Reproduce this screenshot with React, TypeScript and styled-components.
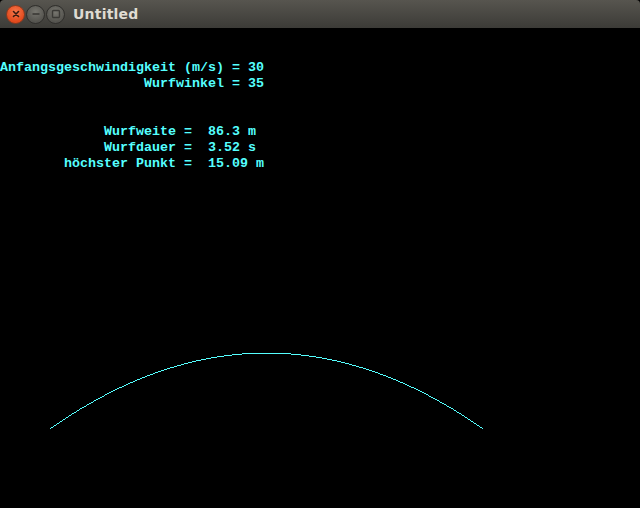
import React from 'react';
import styled, { createGlobalStyle } from 'styled-components';

const GlobalStyle = createGlobalStyle`
  html, body {
    margin: 0;
    padding: 0;
    background: #000;
  }
`;

const Window = styled.div`
  width: 640px;
  height: 508px;
  display: flex;
  flex-direction: column;
  background: #000;
  overflow: hidden;
`;

const TitleBar = styled.div`
  height: 28px;
  flex: none;
  display: flex;
  align-items: center;
  padding-left: 6px;
  background: linear-gradient(#57554f, #3c3b37);
  border-top-left-radius: 4px;
  border-top-right-radius: 4px;
`;

const Buttons = styled.div`
  display: flex;
  gap: 1px;
  margin-right: 8px;
`;

const CircleButton = styled.div<{ $kind: 'close' | 'min' | 'max' }>`
  width: 19px;
  height: 19px;
  border-radius: 50%;
  box-sizing: border-box;
  display: flex;
  align-items: center;
  justify-content: center;
  border: 1px solid ${(p) => (p.$kind === 'close' ? '#8c3a1f' : '#2f2e2b')};
  background: ${(p) =>
    p.$kind === 'close'
      ? 'radial-gradient(circle at 50% 35%, #f6784c, #e2491c 70%)'
      : 'radial-gradient(circle at 50% 35%, #77766f, #55544f 70%)'};
`;

const Title = styled.span`
  font-family: 'DejaVu Sans', 'Noto Sans', sans-serif;
  font-weight: bold;
  font-size: 14px;
  color: #dfdbd2;
  letter-spacing: 0.2px;
`;

const Screen = styled.div`
  position: relative;
  flex: 1;
  display: flex;
  flex-direction: column;
  padding-top: 32px;
`;

const Row = styled.div`
  height: 16px;
  line-height: 16px;
  white-space: pre;
  font-family: 'Liberation Mono', 'DejaVu Sans Mono', monospace;
  font-weight: bold;
  font-size: 13.33px;
  color: #55ffff;
`;

const Plot = styled.svg`
  position: absolute;
  left: 0;
  top: 0;
`;

const rows = [
  'Anfangsgeschwindigkeit (m/s) = 30',
  '                  Wurfwinkel = 35',
  '',
  '',
  '             Wurfweite =  86.3 m',
  '             Wurfdauer =  3.52 s',
  '        höchster Punkt =  15.09 m',
];

// Flugbahn: 5 px pro Meter, Abwurf bei x=50, Boden bei y=400 (Screen-Koordinaten)
const trajectory = () => {
  const x0 = 50;
  const width = 432;
  const height = 75.45;
  const ground = 400;
  const pts: { x: number; y: number }[] = [];
  for (let i = 0; i <= width; i++) {
    const t = i / width;
    pts.push({ x: x0 + i, y: Math.round(ground - 4 * height * t * (1 - t)) });
  }
  return pts;
};

const Cross = () => (
  <svg width="8" height="8" viewBox="0 0 8 8">
    <path d="M1.5 1.5 L6.5 6.5 M6.5 1.5 L1.5 6.5" stroke="#3a1a10" strokeWidth="1.6" strokeLinecap="round" />
  </svg>
);

const Minus = () => (
  <svg width="10" height="10" viewBox="0 0 10 10">
    <path d="M1.5 5 H8.5" stroke="#3a3935" strokeWidth="1.6" />
  </svg>
);

const Square = () => (
  <svg width="10" height="10" viewBox="0 0 10 10">
    <rect x="1.5" y="1.5" width="7" height="7" rx="1" fill="none" stroke="#3a3935" strokeWidth="1.4" />
  </svg>
);

export default function App() {
  const pts = trajectory();
  return (
    <>
      <GlobalStyle />
      <Window>
        <TitleBar>
          <Buttons>
            <CircleButton $kind="close"><Cross /></CircleButton>
            <CircleButton $kind="min"><Minus /></CircleButton>
            <CircleButton $kind="max"><Square /></CircleButton>
          </Buttons>
          <Title>Untitled</Title>
        </TitleBar>
        <Screen>
          {rows.map((r, i) => (
            <Row key={i}>{r}</Row>
          ))}
          <Plot width="640" height="480" shapeRendering="crispEdges">
            {pts.map((p) => (
              <rect key={p.x} x={p.x} y={p.y} width="1" height="1" fill="#55ffff" />
            ))}
          </Plot>
        </Screen>
      </Window>
    </>
  );
}
